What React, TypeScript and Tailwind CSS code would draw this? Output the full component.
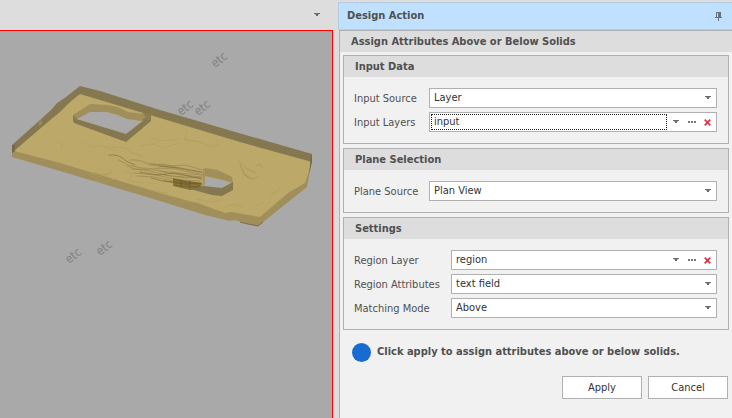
import type { ReactNode } from 'react';

function Caret() {
  return (
    <svg width="7" height="4" viewBox="0 0 7 4" aria-hidden="true" className="shrink-0">
      <path d="M0 0h6v1h-1l-1 1v1H2V2L1 1H0z" fill="#6b6b6b" />
    </svg>
  );
}

function Group({ title, children }: { title: string; children: ReactNode }) {
  return (
    <section className="border border-[#b0b0b0]">
      <h3 className="h-[21px] bg-[#dddddd] px-[11px] leading-[21px] font-bold">{title}</h3>
      <div className="flex flex-col gap-1 py-[11px] pr-[11px] pl-[10px]">{children}</div>
    </section>
  );
}

function Field({ id, label, wide, children }: { id: string; label: string; wide?: boolean; children: ReactNode }) {
  return (
    <div className={wide ? 'grid grid-cols-[97px_1fr]' : 'grid grid-cols-[75px_1fr]'}>
      <label htmlFor={id} className="h-5 leading-[22px] whitespace-nowrap">{label}</label>
      {children}
    </div>
  );
}

function SelectBox({ id, value }: { id: string; value: string }) {
  return (
    <div className="relative">
      <select
        id={id}
        className="block h-5 w-full appearance-none border border-[#b0b0b0] bg-white pt-px pr-5 pl-1 text-[#333333] outline-none"
      >
        <option>{value}</option>
      </select>
      <span className="pointer-events-none absolute inset-y-0 right-[5px] flex items-center">
        <Caret />
      </span>
    </div>
  );
}

function LayerBox({ id, value, active }: { id: string; value: string; active?: boolean }) {
  return (
    <div className="flex h-5 border border-[#b0b0b0] bg-white p-px">
      <input
        id={id}
        defaultValue={value}
        className={
          active
            ? 'min-w-0 flex-1 border border-dotted border-[#222222] px-[2px] pt-px text-[#333333] outline-none'
            : 'min-w-0 flex-1 border border-transparent px-[2px] pt-px text-[#333333] outline-none'
        }
      />
      <button aria-label="Show layers" className="flex w-4 items-center justify-center pl-[3px]">
        <Caret />
      </button>
      <button aria-label="Browse layers" className="flex w-4 items-center justify-center pl-[2px]">
        <svg width="8" height="2" viewBox="0 0 8 2">
          <path d="M0 0h2v2H0zM3 0h2v2H3zM6 0h2v2H6z" fill="#777777" />
        </svg>
      </button>
      <button aria-label="Clear layer" className="flex w-4 items-center justify-center pl-px">
        <svg width="7" height="7" viewBox="0 0 7 7">
          <path d="M.7.7l5.600 5.600M6.300.7L.7 6.300" stroke="#dc3545" strokeWidth="1.700" />
        </svg>
      </button>
    </div>
  );
}

const labels = [
  [215, 68],
  [181, 116],
  [198, 116],
  [69, 264],
  [100, 256],
];

function Viewport() {
  return (
    <svg viewBox="0 31 332 387" className="block w-full" role="img" aria-label="Solid model view">
      <g fill="#828282" fontSize="12">
        {labels.map(([x, y]) => (
          <text key={x} x={x} y={y} transform={`rotate(-38 ${x} ${y})`}>
            etc
          </text>
        ))}
      </g>
      <path
        fill="#bca868"
        fillRule="evenodd"
        d="M13 150L42 126 80 90 312 158 306 187 259 221 230 217 160 197 13 154zM77 119L90 112 107 112 118 115 127 119 142 121 126 134zM205 177L223 180 230 184 224 187 213 188 204 186z"
      />
      <path fill="#a08f5b" d="M14 151L60 163 100 175 160 193 200 204 225 213 231 212 260 217 288 193 305 183 312 162 312 160 307 187 297 195 258 226 234 220 230 221 205 215 160 201 110 186 70 174 12 157V152z" />
      <path fill="#857850" d="M12 145L40 120 51 110 57 103 66 97 80 86 100 91 160 110 225 129 312 154V162L240 142 160 118 80 94 70 102 61 111 42 127 14 151 12 153z" />
      <path fill="#74694a" d="M12 146l3-2v7l-3 2zM311 155h1v7l-3 12z" />
      <path fill="#9b8b58" d="M39 122l3-2v4l-3 2z" />
      <path fill="#a08f5b" d="M73 115L90 104 108 105 118 107 128 112 151 115V121L142 121 127 119 118 115 107 112 90 112 77 119 74 122z" />
      <path fill="#857850" d="M73 118L126 134 144 120 151 115V121L126 142 74 123z" />
      <path fill="#8d7d4d" d="M73 115l4 4-4 3zM142 113l9 1v6h-9l4-3z" />
      <path fill="#a08f5b" d="M205 168l13 2 14 7 1 6-10-3-18-4z" />
      <path fill="#857850" d="M195 187l9-1 18 2 11-6v8l-11 6-10-1-22-6z" />
      <g fill="none" strokeLinecap="round" strokeWidth=".6">
        <path
          stroke="#94824f"
          d="M119 160l9 5 13 3 18 1M130 160q12-1 19 5l15-1 15 4M127 166l9 3 18 1 20 4 27 3M131 169l13 1 26 6 32 2M134 173l23 2 20 5 24 1M137 176l17 1 24 5 24 1M148 163l20 3 17-1 18 5M151 165l24 3 28 5M156 168l20 1 27 6M160 171l18 2 24 2M165 175l20 3 17-1"
        />
        <path stroke="#74673f" d="M109 155q11-1 17 6l9 4M140 172l17 3 18-2 27 6M151 178l12 3 13 1 25 3M159 166l21 2 22 4M164 181l17 3 19-1M204 169v15l-4 4" />
        <path stroke="#b09c5b" d="M84 143l9 4 10-1 14 5M111 147q14-1 22 6l10 3M53 145l5-4 5 5-3 4M91 173l8 4 12-4M93 180l11 3 13-5M123 171l9 3-3 7 14 2M140 146l14-2 9 4 17-5M150 138l14 3 13-2M178 123l9 8-3 8 17 3M185 140l16 2 10 5 8-3M196 199l16 3 10-2M226 207l8-3 10 3M255 206l9-4M270 195l10-6M137 185l12 5 18 3" />
        <path stroke="#a4915a" d="M239 161l7 7 10 5M240 164l4 11 9 4 5-3M243 170l5 8 6 1M256 166l4-2 3 4" />
        <path stroke="#aa9555" d="M94 172q10 6 17 0M89 174q12 9 20 3M166 196l13 5 21 2" />
      </g>
      <path fill="#80692b" opacity=".8" d="M173 178l11 2 18 3-2 4-10 3-17-4z" />
      <path fill="none" stroke="#5a4e29" strokeWidth=".5" d="M173 179l16 4 13 1M173 182l17 3M174 185l14 2 12-1M190 181v9M181 180v7" />
      <path fill="none" stroke="#766a42" strokeWidth="1" d="M240 222l8 2 10 2 5-4" />
    </svg>
  );
}

export default function App() {
  return (
    <div className="flex min-h-screen bg-[#dddddd] font-['DejaVu_Sans_Condensed','DejaVu_Sans',sans-serif] text-[11px] text-[#505050]">
      <main className="flex min-w-0 flex-1 flex-col">
        <div className="flex h-[30px] items-center justify-end pr-3">
          <button aria-label="View options" className="flex h-5 items-center">
            <Caret />
          </button>
        </div>
        <div className="flex-1 border-t border-r border-[#ff0000] bg-[#a9a9a9]">
          <Viewport />
        </div>
      </main>
      <aside className="ml-[5px] flex w-[394px] shrink-0 flex-col pt-[2px]">
        <header className="flex h-7 items-center justify-between border-y border-l border-[#b5cce2] bg-[#bfe0ff] pr-[10px] pl-2">
          <h1 className="font-bold">Design Action</h1>
          <button aria-label="Pin panel">
            <svg width="7" height="9" viewBox="0 0 7 9" className="block">
              <path fillRule="evenodd" d="M1 0h5v5h1v1H4v3H3V6H0V5h1zM2 1v4h1V1z" fill="#66727d" />
            </svg>
          </button>
        </header>
        <div className="ml-px flex-1 border-t border-l border-[#b0b0b0] bg-[#f1f1f1]">
          <h2 className="h-[21px] bg-[#dddddd] px-[11px] leading-[21px] font-bold">
            Assign Attributes Above or Below Solids
          </h2>
          <form className="px-[3px] pt-[3px]" onSubmit={(e) => e.preventDefault()}>
            <div className="flex flex-col gap-1">
              <Group title="Input Data">
                <Field id="input-source" label="Input Source">
                  <SelectBox id="input-source" value="Layer" />
                </Field>
                <Field id="input-layers" label="Input Layers">
                  <LayerBox id="input-layers" value="input" active />
                </Field>
              </Group>
              <Group title="Plane Selection">
                <Field id="plane-source" label="Plane Source">
                  <SelectBox id="plane-source" value="Plan View" />
                </Field>
              </Group>
              <Group title="Settings">
                <Field id="region-layer" label="Region Layer" wide>
                  <LayerBox id="region-layer" value="region" />
                </Field>
                <Field id="region-attributes" label="Region Attributes" wide>
                  <SelectBox id="region-attributes" value="text field" />
                </Field>
                <Field id="matching-mode" label="Matching Mode" wide>
                  <SelectBox id="matching-mode" value="Above" />
                </Field>
              </Group>
            </div>
            <p className="mt-3 flex h-5 items-center gap-[6px] pl-[9px] font-bold whitespace-nowrap">
              <span className="size-[19px] shrink-0 rounded-full bg-[#186bd3]" />
              Click apply to assign attributes above or below solids.
            </p>
            <div className="mt-[14px] flex justify-end gap-[6px] pr-px">
              <button className="h-[23px] w-20 border border-[#b0b0b0] bg-white pt-px text-[#333333]">Apply</button>
              <button className="h-[23px] w-20 border border-[#b0b0b0] bg-white pt-px text-[#333333]">Cancel</button>
            </div>
          </form>
        </div>
      </aside>
    </div>
  );
}
